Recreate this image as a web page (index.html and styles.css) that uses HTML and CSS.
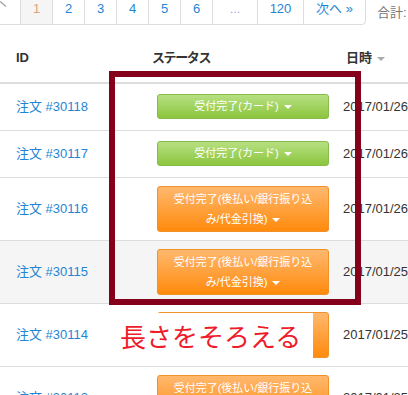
FILE: index.html
```html
<!DOCTYPE html>
<html lang="ja">
<head>
<meta charset="utf-8">
<title>注文一覧</title>
<link rel="stylesheet" href="styles.css">
</head>
<body>
<div class="page">
  <div class="topbar">
    <ul class="pager">
      <li class="pg pg-prev"><span class="pg-link"><svg class="prev-mark" width="8" height="7" viewBox="0 0 8 7"><path d="M0 0.5 L6 5.5" stroke="#a0a0a0" stroke-width="1.2" fill="none"/></svg></span></li>
      <li class="pg pg-num pg-active"><span class="pg-link">1</span></li>
      <li class="pg pg-num"><a class="pg-link" href="#">2</a></li>
      <li class="pg pg-num"><a class="pg-link" href="#">3</a></li>
      <li class="pg pg-num"><a class="pg-link" href="#">4</a></li>
      <li class="pg pg-num"><a class="pg-link" href="#">5</a></li>
      <li class="pg pg-num"><a class="pg-link" href="#">6</a></li>
      <li class="pg pg-dots"><span class="pg-link">…</span></li>
      <li class="pg pg-last"><a class="pg-link" href="#">120</a></li>
      <li class="pg pg-next"><a class="pg-link" href="#">次へ »</a></li>
    </ul>
    <span class="total">合計:</span>
  </div>

  <table class="orders">
    <thead>
      <tr>
        <th class="col-id">ID</th>
        <th class="col-status"><span class="status-head">ステータス</span></th>
        <th class="col-date">日時<span class="sort-caret"></span></th>
      </tr>
    </thead>
    <tbody>
      <tr>
        <td class="cell-id"><a class="order-link" href="#">注文 #30118</a></td>
        <td class="cell-status"><span class="btn btn-card">受付完了(カード)<span class="caret"></span></span></td>
        <td class="cell-date">2017/01/26</td>
      </tr>
      <tr>
        <td class="cell-id"><a class="order-link" href="#">注文 #30117</a></td>
        <td class="cell-status"><span class="btn btn-card">受付完了(カード)<span class="caret"></span></span></td>
        <td class="cell-date">2017/01/26</td>
      </tr>
      <tr>
        <td class="cell-id"><a class="order-link" href="#">注文 #30116</a></td>
        <td class="cell-status"><span class="btn btn-later">受付完了(後払い/銀行振り込<br>み/代金引換)<span class="caret"></span></span></td>
        <td class="cell-date">2017/01/26</td>
      </tr>
      <tr class="row-hover">
        <td class="cell-id"><a class="order-link" href="#">注文 #30115</a></td>
        <td class="cell-status"><span class="btn btn-later">受付完了(後払い/銀行振り込<br>み/代金引換)<span class="caret"></span></span></td>
        <td class="cell-date">2017/01/25</td>
      </tr>
      <tr>
        <td class="cell-id"><a class="order-link" href="#">注文 #30114</a></td>
        <td class="cell-status"><span class="btn btn-later">受付完了(後払い/銀行振り込<br>み/代金引換)<span class="caret"></span></span></td>
        <td class="cell-date">2017/01/25</td>
      </tr>
      <tr>
        <td class="cell-id"><a class="order-link" href="#">注文 #30113</a></td>
        <td class="cell-status"><span class="btn btn-later">受付完了(後払い/銀行振り込<br>み/代金引換)<span class="caret"></span></span></td>
        <td class="cell-date">2017/01/25</td>
      </tr>
    </tbody>
  </table>

  <div class="highlight-box"></div>
  <div class="note">長さをそろえる</div>
</div>
</body>
</html>
```

FILE: styles.css
```css
html, body {
  margin: 0;
  padding: 0;
  overflow: hidden;
  background: #fff;
}

body {
  font-family: "Liberation Sans", "Noto Sans CJK JP", sans-serif;
  font-size: 13px;
  color: #333;
}

.page {
  position: relative;
  width: 408px;
  height: 395px;
  overflow: hidden;
}

/* ---------- pagination ---------- */
.topbar {
  display: flex;
  align-items: flex-start;
  margin-top: -7px;
}

.pager {
  display: flex;
  list-style: none;
  margin: 0;
  padding: 0;
}

.pg {
  margin-left: -1px;
}

.pg-link {
  display: block;
  box-sizing: border-box;
  height: 32px;
  padding: 6px 0;
  line-height: 18px;
  text-align: center;
  border: 1px solid #ddd;
  color: #1f86d3;
  text-decoration: none;
  background: #fff;
}

.pg-prev {
  margin-left: 0;
}

.pg-prev .pg-link {
  width: 21px;
  border-left: none;
  position: relative;
}

.prev-mark {
  display: block;
  margin-top: 1px;
}

.pg-num .pg-link {
  width: 33px;
}

.pg-active .pg-link {
  background: #f5f5f5;
  color: #d9a27c;
}

.pg-dots .pg-link {
  width: 46px;
  color: #7fa9cc;
  font-size: 11px;
}

.pg-last .pg-link {
  width: 47px;
}

.pg-next .pg-link {
  width: 63px;
  border-bottom-right-radius: 4px;
  border-top-right-radius: 4px;
}

.total {
  margin-left: 11px;
  margin-top: 11px;
  font-size: 13px;
  color: #777;
  line-height: 18px;
  white-space: nowrap;
}

/* ---------- table ---------- */
.orders {
  margin-top: 15px;
  width: 470px;
  border-collapse: collapse;
  table-layout: fixed;
}

.orders th {
  text-align: left;
  font-weight: bold;
  line-height: 20px;
  padding: 8px 8px 14px;
  border-bottom: 2px solid #ddd;
  color: #333;
  white-space: nowrap;
}

.col-id {
  width: 144px;
  box-sizing: border-box;
  padding-left: 16px !important;
}

.col-status {
  width: 191px;
  box-sizing: border-box;
}

.status-head {
  letter-spacing: -1.4px;
}

.col-date {
  padding-left: 11px !important;
}

.sort-caret {
  display: inline-block;
  width: 0;
  height: 0;
  margin-left: 5px;
  vertical-align: middle;
  border-top: 4px solid #aaa;
  border-left: 4px solid transparent;
  border-right: 4px solid transparent;
}

.orders td {
  padding: 8px;
  line-height: 20px;
  vertical-align: middle;
  border-top: 1px solid #ddd;
  white-space: nowrap;
}

.orders tbody tr:first-child td {
  border-top: none;
}

.row-hover td {
  background: #f5f5f5;
}

.cell-id {
  padding-left: 16px !important;
}

.order-link {
  color: #1f86d3;
  text-decoration: none;
}

.cell-date {
  color: #333;
}

/* ---------- status buttons ---------- */
.btn {
  display: block;
  box-sizing: border-box;
  width: 172px;
  margin-left: 5px;
  border: 1px solid;
  border-radius: 3px;
  color: #fff;
  font-size: 11px;
  line-height: 20px;
  text-align: center;
  white-space: nowrap;
}

.btn-card {
  height: 25px;
  margin-top: 2px;
  margin-bottom: 3px;
  padding: 1px 0 2px;
  border-color: #86bd4a;
  background: linear-gradient(to bottom, #b7e082, #8cc53e);
}

.btn-later {
  height: 46px;
  padding: 2px 0;
  border-color: #f0912c;
  background: linear-gradient(to bottom, #ffb86e, #ff8a0c);
}

.caret {
  display: inline-block;
  width: 0;
  height: 0;
  margin-left: 5px;
  vertical-align: middle;
  border-top: 4px solid #fff;
  border-left: 4px solid transparent;
  border-right: 4px solid transparent;
}

/* ---------- annotation overlays ---------- */
.highlight-box {
  position: absolute;
  left: 109px;
  top: 71px;
  width: 252px;
  height: 234px;
  box-sizing: border-box;
  border: 6px solid #85001b;
}

.note {
  position: absolute;
  left: 112px;
  top: 313px;
  width: 201px;
  height: 45px;
  box-sizing: border-box;
  padding-left: 8px;
  background: #fff;
  color: #ee1c2a;
  font-family: "Noto Sans CJK JP", sans-serif;
  font-size: 26px;
  line-height: 45px;
  white-space: nowrap;
}
```
